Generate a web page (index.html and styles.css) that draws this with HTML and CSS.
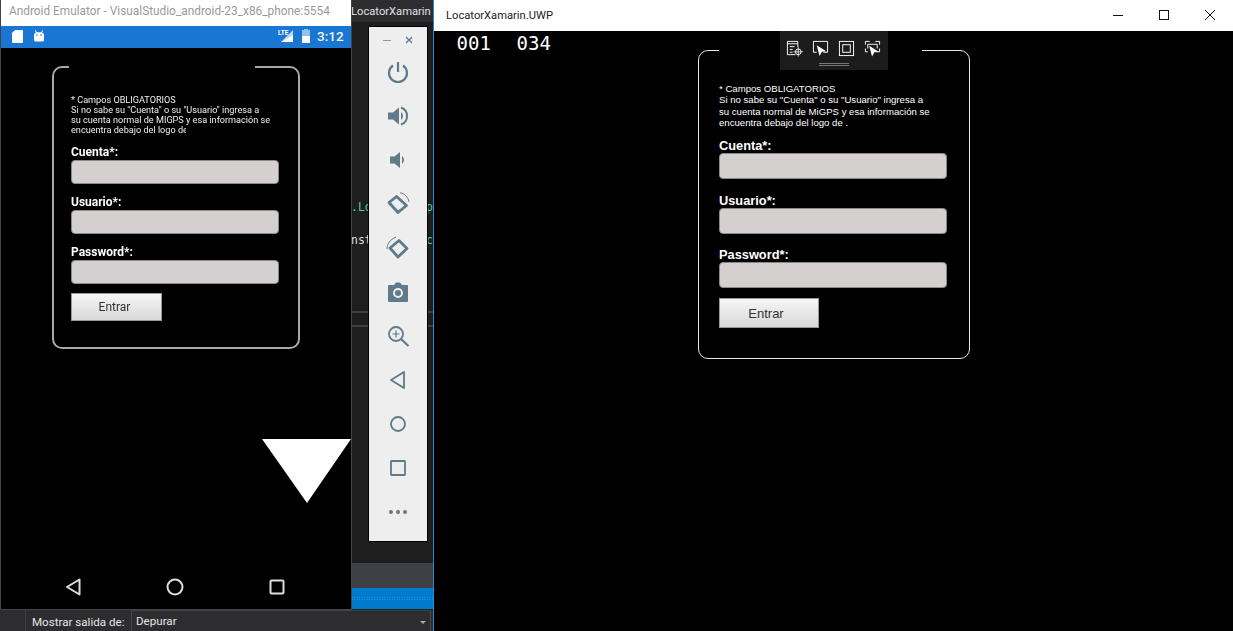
FILE: index.html
```html
<!DOCTYPE html>
<html lang="es">
<head>
<meta charset="utf-8">
<title>Emulador y LocatorXamarin.UWP</title>
<link rel="stylesheet" href="styles.css">
</head>
<body>
<div class="desktop">

  <section class="vs">
    <div class="vs-title">LocatorXamarin</div>
    <div class="vs-code">
      <span class="code-a">.Loc</span><span class="code-b">op</span>
    </div>
    <div class="vs-code second">
      <span class="code-c">nst</span><span class="code-b">c</span>
    </div>
    <div class="vs-rule r1"></div>
    <div class="vs-rule r2"></div>
    <div class="vs-gray"></div>
    <div class="vs-blue"></div>
    <div class="vs-output">
      <span class="out-label">Mostrar salida de:</span>
      <div class="out-select"><span>Depurar</span><i class="caret"></i></div>
    </div>
  </section>

  <section class="emu">
    <header class="emu-title">Android Emulator - VisualStudio_android-23_x86_phone:5554</header>
    <div class="status">
      <svg class="st-sd" viewBox="0 0 11 13"><path d="M3 0h7a1 1 0 0 1 1 1v11a1 1 0 0 1-1 1H1a1 1 0 0 1-1-1V3z" fill="#fff"/></svg>
      <svg class="st-bot" viewBox="0 0 12 12"><path d="M2.500 0l1.500 2.300h4L9.500 0l.6.4L9 2.500C10.200 3 11 3.800 11 5v5a1.500 1.500 0 0 1-1.500 1.500h-7A1.500 1.500 0 0 1 1 10V5c0-1.200.8-2 2-2.500L1.900.4z" fill="#fff"/><circle cx="4" cy="5" r=".8" fill="#1976d2"/><circle cx="8" cy="5" r=".8" fill="#1976d2"/></svg>
      <span class="st-fill"></span>
      <svg class="st-sig" viewBox="0 0 16 14"><text x="0" y="6" font-size="6.500" font-family="Roboto" font-weight="700" fill="#fff">LTE</text><path d="M15 1v12H3z" fill="#fff" opacity=".7"/><path d="M15 6v7H8l-5 0z" fill="#fff"/></svg>
      <svg class="st-bat" viewBox="0 0 10 14"><path d="M3 0h4v1h2v13H1V1h2z" fill="#fff" opacity=".55"/><path d="M1 7h8v7H1z" fill="#fff"/></svg>
      <span class="st-time">3:12</span>
    </div>
    <div class="emu-screen">
      <div class="card card-a">
        <p class="note">* Campos OBLIGATORIOS<br>Si no sabe su "Cuenta" o su "Usuario" ingresa a<br>su cuenta normal de MIGPS y esa información se<br><span class="clip">encuentra debajo del logo de</span></p>
        <label class="lbl first">Cuenta*:</label><div class="inp"></div>
        <label class="lbl">Usuario*:</label><div class="inp"></div>
        <label class="lbl">Password*:</label><div class="inp"></div>
        <button class="btn" type="button">Entrar</button>
      </div>
      <div class="tri"></div>
      <nav class="softkeys">
        <svg viewBox="0 0 18 20"><path d="M15.500 2.500v15L3 10z" fill="none" stroke="#ddd" stroke-width="2" stroke-linejoin="round"/></svg>
        <svg viewBox="0 0 18 20"><circle cx="9" cy="10" r="7.500" fill="none" stroke="#ddd" stroke-width="2"/></svg>
        <svg viewBox="0 0 18 20"><rect x="2.500" y="3.500" width="13" height="13" rx="1" fill="none" stroke="#ddd" stroke-width="2"/></svg>
      </nav>
    </div>
  </section>

  <aside class="tools">
    <div class="tools-win"><i class="t-min"></i><svg class="t-x" viewBox="0 0 8 8"><path d="M1 1l6 6M7 1L1 7" stroke="#5f7a88" stroke-width="1.200"/></svg></div>
    <svg class="ti" viewBox="0 0 24 24"><path d="M7 5.500a9 9 0 1 0 10 0" fill="none" stroke="#5f7a88" stroke-width="2.200"/><path d="M12 2v10" stroke="#5f7a88" stroke-width="2.200"/></svg>
    <svg class="ti" viewBox="0 0 24 24"><path d="M2 8.500h5L13 3.500v17l-6-5H2z" fill="#5f7a88"/><path d="M15 8a5 5 0 0 1 0 8z" fill="#5f7a88"/><path d="M15 3.500a9 9 0 0 1 0 17" fill="none" stroke="#5f7a88" stroke-width="2"/></svg>
    <svg class="ti" viewBox="0 0 24 24"><path d="M4 8.500h4.500L14 4v16l-5.500-4.500H4z" fill="#5f7a88"/><path d="M16 8a5 5 0 0 1 0 8z" fill="#5f7a88"/></svg>
    <svg class="ti" viewBox="0 0 24 24"><path d="M10.500 4.500L20.500 13.500 12 20.500 3 10.500z" fill="none" stroke="#5f7a88" stroke-width="2.800" stroke-linejoin="round"/><path d="M14 .8c4.500.5 8 4 9 9" fill="none" stroke="#5f7a88" stroke-width="1"/></svg>
    <svg class="ti" viewBox="0 0 24 24"><path d="M13 4.500L21 12.500 12 21 4 12z" fill="none" stroke="#5f7a88" stroke-width="2.800" stroke-linejoin="round"/><path d="M1 13C1 8 4 3.500 10 1" fill="none" stroke="#5f7a88" stroke-width="1"/></svg>
    <svg class="ti" viewBox="0 0 24 24"><path d="M3 5h5l2-2.500h4L16 5h5a1 1 0 0 1 1 1v15a1 1 0 0 1-1 1H3a1 1 0 0 1-1-1V6a1 1 0 0 1 1-1z" fill="#5f7a88"/><circle cx="12" cy="13" r="4" fill="none" stroke="#eee" stroke-width="2"/></svg>
    <svg class="ti" viewBox="0 0 24 24"><circle cx="10" cy="10" r="7" fill="none" stroke="#5f7a88" stroke-width="1.800"/><path d="M15 15l7.500 7" stroke="#5f7a88" stroke-width="2.200"/><path d="M10 6.500v7M6.500 10h7" stroke="#5f7a88" stroke-width="1.200"/></svg>
    <svg class="ti" viewBox="0 0 24 24"><path d="M18 4v16L5 12z" fill="none" stroke="#5f7a88" stroke-width="1.800" stroke-linejoin="round"/></svg>
    <svg class="ti" viewBox="0 0 24 24"><circle cx="12" cy="12" r="7" fill="none" stroke="#5f7a88" stroke-width="1.800"/></svg>
    <svg class="ti" viewBox="0 0 24 24"><rect x="5" y="5" width="14" height="14" rx=".5" fill="none" stroke="#5f7a88" stroke-width="1.800"/></svg>
    <svg class="ti" viewBox="0 0 24 24"><circle cx="5" cy="12" r="2" fill="#5f7a88"/><circle cx="12" cy="12" r="2" fill="#5f7a88"/><circle cx="19" cy="12" r="2" fill="#5f7a88"/></svg>
  </aside>

  <section class="uwp">
    <header class="uwp-title">
      <span class="uwp-name">LocatorXamarin.UWP</span>
      <div class="caption">
        <svg viewBox="0 0 12 12"><path d="M1 6.500h10" stroke="#111" stroke-width="1"/></svg>
        <svg viewBox="0 0 12 12"><rect x="1.500" y="1.500" width="9" height="9" fill="none" stroke="#111" stroke-width="1"/></svg>
        <svg viewBox="0 0 12 12"><path d="M1 1l10 10M11 1L1 11" stroke="#111" stroke-width="1"/></svg>
      </div>
    </header>
    <div class="uwp-body">
      <div class="counter"><span>001</span><span>034</span></div>
      <div class="card card-b">
        <p class="note">* Campos OBLIGATORIOS<br>Si no sabe su "Cuenta" o su "Usuario" ingresa a<br>su cuenta normal de MiGPS y esa información se<br>encuentra debajo del logo de .</p>
        <label class="lbl first">Cuenta*:</label><div class="inp"></div>
        <label class="lbl">Usuario*:</label><div class="inp"></div>
        <label class="lbl">Password*:</label><div class="inp"></div>
        <button class="btn" type="button">Entrar</button>
      </div>
      <div class="dbg">
        <div class="dbg-icons">
          <svg viewBox="0 0 18 18"><path d="M10 15.500H1.500v-14h11v6M1.500 4h11M4 7h5M4 10h3M4 13h3" fill="none" stroke="#fff"/><circle cx="13" cy="12.500" r="3" fill="none" stroke="#fff"/><path d="M13 7.500v10M8 12.500h10" stroke="#fff" stroke-width=".8"/></svg>
          <svg viewBox="0 0 18 18"><path d="M5 13H1.500V1.500h15V13H12" fill="none" stroke="#fff"/><path d="M5 5.500l10 6.500-4.500.5-2.500 4.500z" fill="#fff"/></svg>
          <svg viewBox="0 0 18 18"><rect x="1.500" y="1.500" width="15" height="15" fill="none" stroke="#fff"/><rect x="5" y="5" width="8" height="8" fill="none" stroke="#fff"/></svg>
          <svg viewBox="0 0 18 18"><path d="M1.500 5V1.500H6M12 1.500h4.500V5M16.500 9v3.500H13M1.500 9v3.500H4M4 9V4.500h10V9" fill="none" stroke="#fff"/><path d="M5.500 6l10 6.500-4.500.5-2.500 4.500z" fill="#fff"/></svg>
        </div>
        <div class="dbg-grip"></div>
      </div>
    </div>
  </section>
</div>
</body>
</html>
```
FILE: styles.css
```css
* { box-sizing: border-box; }
html, body { margin: 0; padding: 0; background: #000; }
.desktop { position: relative; width: 1233px; height: 631px; overflow: hidden; background: #1e1e1e; font-family: "Liberation Sans", Arial, sans-serif; }

/* Visual Studio window behind the others */
.vs { position: absolute; left: 0; top: 0; width: 434px; height: 631px; background: #1e1e1e; border-right: 1px solid #2b88d8; }
.vs-title { position: absolute; left: 351px; top: 0; width: 82px; height: 22px; padding-top: 4px; background: #2d2d30; color: #e0e0e0; font: 11.200px Roboto, sans-serif; line-height: 16px; white-space: nowrap; overflow: hidden; }
.vs-code { position: absolute; left: 351px; top: 200px; width: 82px; display: flex; justify-content: space-between; font: 11.500px/14px "DejaVu Sans Mono", monospace; white-space: nowrap; }
.vs-code.second { top: 233px; }
.code-a, .code-b { color: #4ec9b0; }
.code-c { color: #dcdcdc; }
.vs-rule { position: absolute; left: 351px; width: 82px; height: 2px; background: #3f3f3f; }
.r1 { top: 311px; }
.r2 { top: 325px; }
.vs-gray { position: absolute; left: 351px; top: 563px; width: 82px; height: 25px; background: #3f3f46; }
.vs-blue { position: absolute; left: 351px; top: 588px; width: 82px; height: 21px; background: #007acc; }
.vs-blue::before { content: ""; position: absolute; left: 0; right: 0; top: 8px; height: 5px; background: radial-gradient(circle, #4ba3dc 0.7px, transparent 0.8px) 0 0 / 2.500px 2.500px; }
.vs-output { position: absolute; left: 0; top: 610px; width: 433px; height: 21px; background: #2d2d30; display: flex; align-items: center; padding-left: 25px; color: #e6e6e6; font: 11.600px Roboto, sans-serif; }
.out-label { width: 106px; padding-left: 6px; border-left: 1px solid #3f3f46; height: 21px; line-height: 24px; white-space: nowrap; }
.out-select { flex: 1; height: 21px; margin-right: 2px; border-left: 1px solid #47474d; border-right: 1px solid #47474d; border-top: 1px solid #3f3f46; padding-left: 4px; line-height: 24px; display: flex; justify-content: space-between; align-items: center; }
.caret { width: 0; height: 0; margin-right: 4px; margin-top: 3px; border: 3px solid transparent; border-top-color: #aaa; border-bottom: 0; }

/* Android emulator */
.emu { position: absolute; left: 0; top: 0; width: 352px; height: 610px; border-left: 1px solid #444; border-right: 1px solid #444; border-bottom: 1px solid #444; background: #000; display: flex; flex-direction: column; }
.emu-title { height: 26px; background: #fff; color: #9a9a9a; font: 11.850px/22px Roboto, sans-serif; padding-left: 8px; white-space: nowrap; overflow: hidden; }
.status { height: 22px; background: #1976d2; display: flex; align-items: center; padding: 0 7px 2px 11px; }
.st-sd { width: 11px; height: 13px; }
.st-bot { width: 12px; height: 12px; margin-left: 10px; }
.st-fill { flex: 1; }
.st-sig { width: 16px; height: 14px; }
.st-bat { width: 10px; height: 14px; margin-left: 7px; }
.st-time { color: #f4f4f4; font: 500 13.500px Roboto, sans-serif; margin-left: 6px; width: 27px; }
.emu-screen { position: relative; flex: 1; background: #000; padding: 18px 0 0 51px; }
.softkeys { position: absolute; left: 63px; bottom: 12px; width: 222px; display: flex; justify-content: space-between; }
.softkeys svg { width: 18px; height: 20px; }
.tri { position: absolute; right: 0; top: 391px; width: 0; height: 0; border-left: 45px solid transparent; border-right: 44px solid transparent; border-top: 64px solid #fff; }

/* form card shared */
.card { position: relative; display: flex; flex-direction: column; align-items: flex-start; color: #fff; }
.card::before { content: ""; position: absolute; top: -2px; height: 3px; background: #000; }
.note { margin: 0; white-space: nowrap; }
.lbl { display: block; font-weight: 700; }
.inp { width: 100%; background: #d4d0d0; border: 1px solid #8a8a8a; }
.btn { padding: 0; border: 1px solid #999; background: linear-gradient(#f6f6f6, #d8d8d8); color: #333; }

.card-a { width: 248px; height: 283px; border: 2px solid #a8a8a8; border-radius: 10px; padding: 27px 19px 0 17px; filter: blur(.35px); }
.card-a::before { left: 15px; width: 186px; }
.card-a .note { font: 9.150px/10px Roboto, sans-serif; color: #eee; }
.card-a .clip { display: inline-block; width: 115px; overflow: hidden; vertical-align: bottom; }
.card-a .lbl { font: 700 12px/15px Roboto, sans-serif; margin-top: 11px; }
.card-a .lbl.first { margin-top: 10px; }
.card-a .inp { height: 24px; border-radius: 4px; }
.card-a .btn { width: 91px; height: 28px; margin-top: 9px; font: 12px Roboto, sans-serif; padding-right: 4px; }

/* floating emulator toolbar */
.tools { position: absolute; left: 368px; top: 26px; width: 60px; height: 516px; background: #eee; border: 1px solid #000; display: flex; flex-direction: column; align-items: center; }
.tools-win { width: 100%; height: 24px; flex: none; display: flex; align-items: center; justify-content: space-between; padding: 2px 14px 0 14px; margin-bottom: 9px; }
.t-min { width: 8px; height: 1px; background: #8a9aa3; }
.t-x { width: 8px; height: 8px; }
.ti { width: 24px; height: 24px; margin-bottom: 20px; flex: none; }
.ti:last-child { margin-bottom: 0; }

/* UWP window */
.uwp { position: absolute; left: 434px; top: 0; width: 799px; height: 631px; background: #000; display: flex; flex-direction: column; }
.uwp-title { height: 31px; flex: none; background: #fff; display: flex; justify-content: space-between; }
.uwp-name { font: 11.200px/31px Roboto, sans-serif; color: #222; padding-left: 12px; }
.caption { display: flex; width: 138px; }
.caption svg { width: 12px; height: 12px; margin: 9px 17px 0 17px; flex: none; }
.uwp-body { position: relative; flex: 1; padding: 19px 0 0 264px; }
.counter { position: absolute; left: 22.500px; top: 1px; display: flex; gap: 25.700px; color: #fff; font: 19px/22px "DejaVu Sans Mono", monospace; }
.dbg { position: absolute; left: 346px; top: 0; width: 108px; height: 39px; background: #1c1c1c; }
.dbg-icons { display: flex; gap: 9px; padding: 9px 0 0 6px; }
.dbg-icons svg { width: 17px; height: 17px; flex: none; }
.dbg-grip { width: 30px; height: 3px; margin: 6px auto 0; border-top: 1px solid #777; border-bottom: 1px solid #777; }

.card-b { width: 272px; height: 309px; border: 1px solid #e8e8e8; border-radius: 10px; padding: 32px 22px 0 20px; }
.card-b::before { left: 20px; width: 203px; }
.card-b .note { font: 9.600px/11.300px "Liberation Sans", sans-serif; }
.card-b .lbl { font: 700 12.800px/15px "Liberation Sans", sans-serif; margin-top: 13.500px; }
.card-b .lbl.first { margin-top: 10px; }
.card-b .inp { height: 26px; border-radius: 4px; }
.card-b .btn { width: 100px; height: 30px; margin-top: 10px; font: 13px "Liberation Sans", sans-serif; padding-right: 6px; }
```
